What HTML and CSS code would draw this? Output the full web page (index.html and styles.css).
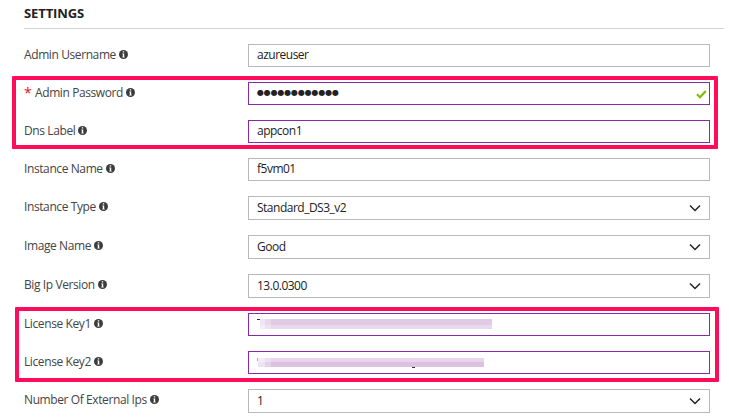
FILE: index.html
```html
<!DOCTYPE html>
<html lang="en">
<head>
<meta charset="utf-8">
<title>Settings</title>
<link rel="stylesheet" href="styles.css">
</head>
<body>
<svg class="defs" aria-hidden="true">
  <symbol id="info" viewBox="0 0 9 9"><circle cx="4.5" cy="4.5" r="4.5" fill="#3c3c3c"/><path d="M3.8 1.2h1.4v1.2H3.8zM3.3 3.5h1.9v3.2h.5v.8H3.3v-.8h.5V4.3h-.5z" fill="#fff"/></symbol>
  <symbol id="chevron" viewBox="0 0 12 8"><path d="M1 1.5l5 5 5-5" fill="none" stroke="#222" stroke-width="1.5"/></symbol>
</svg>
<main class="settings">
  <h1 class="title">SETTINGS</h1>
  <div class="row"><div class="label"><span>Admin Username</span><svg class="info"><use href="#info"/></svg></div><div class="field">azureuser</div></div>
  <section class="group group-login">
    <div class="row"><div class="label"><b class="required">*</b><span>Admin Password</span><svg class="info"><use href="#info"/></svg></div><div class="field edited"><span class="dots">●●●●●●●●●●●●</span><svg class="check" viewBox="0 0 11 9"><path d="M1 4.3l3 3L9.8 1" fill="none" stroke="#7fba00" stroke-width="2"/></svg></div></div>
    <div class="row"><div class="label"><span>Dns Label</span><svg class="info"><use href="#info"/></svg></div><div class="field edited">appcon1</div></div>
  </section>
  <div class="row"><div class="label"><span>Instance Name</span><svg class="info"><use href="#info"/></svg></div><div class="field">f5vm01</div></div>
  <div class="row"><div class="label"><span>Instance Type</span><svg class="info"><use href="#info"/></svg></div><div class="field select">Standard_DS3_v2<svg class="chevron"><use href="#chevron"/></svg></div></div>
  <div class="row"><div class="label"><span>Image Name</span><svg class="info"><use href="#info"/></svg></div><div class="field select">Good<svg class="chevron"><use href="#chevron"/></svg></div></div>
  <div class="row"><div class="label"><span>Big Ip Version</span><svg class="info"><use href="#info"/></svg></div><div class="field select">13.0.0300<svg class="chevron"><use href="#chevron"/></svg></div></div>
  <section class="group group-license">
    <div class="row"><div class="label"><span>License Key1</span><svg class="info"><use href="#info"/></svg></div><div class="field edited"><i class="mask mask-one"></i></div></div>
    <div class="row"><div class="label"><span>License Key2</span><svg class="info"><use href="#info"/></svg></div><div class="field edited"><i class="mask mask-two"></i></div></div>
  </section>
  <div class="row"><div class="label"><span>Number Of External Ips</span><svg class="info"><use href="#info"/></svg></div><div class="field select">1<svg class="chevron"><use href="#chevron"/></svg></div></div>
</main>
</body>
</html>
```
FILE: styles.css
```css
* { box-sizing: border-box; }
body { margin: 0; background: #fff; overflow: hidden; font: 12px/16px "Open Sans", "Noto Sans", sans-serif; color: #222; }
.defs { position: absolute; width: 0; height: 0; }
.settings { display: flex; flex-direction: column; gap: 15px; padding: 0 5px 0 24px; }
.title { height: 29px; margin: 0; padding-top: 4px; border-bottom: 1px solid #d2d2d2; font-size: 13px; line-height: 18px; font-weight: 700; letter-spacing: -0.1px; }
.row { display: flex; width: 686px; }
.label { display: flex; width: 224px; height: 22px; align-items: center; color: #444; letter-spacing: -0.4px; }
.info { width: 9px; height: 9px; margin: 0 0 2px 3px; }
.required { width: 11px; color: #e81123; font-weight: 400; font-size: 14px; }
.field { display: flex; align-items: center; justify-content: space-between; width: 462px; height: 23px; padding: 0 3px 1px 8px; border: 1px solid #b8b8b8; letter-spacing: -0.5px; }
.field.edited { border-color: #862ba5; }
.field.select { height: 24px; padding: 0 8px 0 8px; }
.chevron { width: 12px; height: 8px; }
.check { width: 11px; height: 9px; margin: 2px -1px 0 0; }
.dots { font-family: "DejaVu Sans", sans-serif; font-size: 8px; letter-spacing: -0.16px; margin-top: -1px; }
.group { position: relative; display: flex; flex-direction: column; gap: 15px; }
.group::after { content: ""; position: absolute; border: 4px solid #ff0d5b; border-radius: 1px; }
.group-login::after { inset: -6px 6px -6px -12px; }
.group-license::after { inset: -6px 5px -8px -9px; }
.mask { position: relative; height: 10px; }
.mask::before { content: ""; position: absolute; left: -3px; top: 0; width: 3px; height: 1px; background: #333; }
.mask-one { width: 232px; margin-left: 3px; background: linear-gradient(90deg, #ffffff88 0 5px, #ffffff44 5px 11px, transparent 11px), linear-gradient(#e1cae6 60%, #e9d9ed 60%); }
.mask-two { width: 226px; height: 9px; margin-left: 1px; background: linear-gradient(90deg, #ffffff88 0 7px, #ffffff44 7px 13px, transparent 13px), linear-gradient(#e7d5eb 45%, #dcc1e3 45%); }
.mask-two::before { left: -1px; width: 1px; height: 3px; background: #d3a46c; }
.mask-two::after { content: ""; position: absolute; left: 154px; top: 9px; width: 3px; height: 1px; background: #333; }
```
